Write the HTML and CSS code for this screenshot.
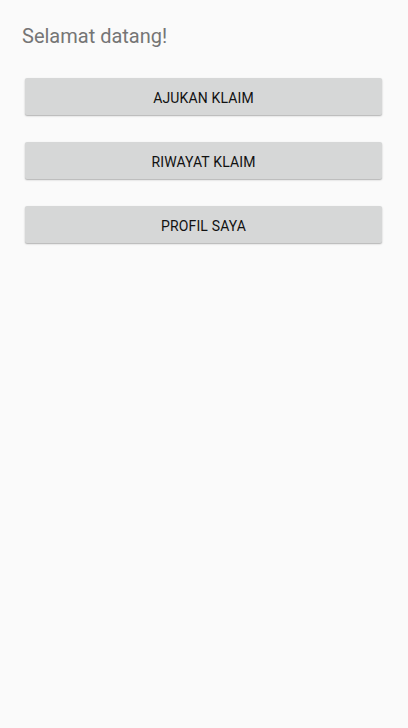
FILE: index.html
```html
<!DOCTYPE html>
<html lang="id">
<head>
<meta charset="utf-8">
<link rel="stylesheet" href="styles.css">
</head>
<body>
<main class="screen">
  <h1 class="title">Selamat datang!</h1>
  <div class="actions">
    <button class="btn">AJUKAN KLAIM</button>
    <button class="btn">RIWAYAT KLAIM</button>
    <button class="btn">PROFIL SAYA</button>
  </div>
</main>
</body>
</html>
```
FILE: styles.css
```css
html, body {
  margin: 0;
  padding: 0;
  background: #fafafa;
  height: 100%;
}
.screen {
  padding: 24px 26px 0 25px;
  font-family: Roboto, "Noto Sans", sans-serif;
}
.title {
  margin: 0 0 0 -3px;
  font-size: 20px;
  line-height: 24px;
  font-weight: 400;
  color: #757575;
}
.actions {
  display: flex;
  flex-direction: column;
  gap: 27px;
  margin-top: 30px;
}
.btn {
  height: 37px;
  border: none;
  border-radius: 2px;
  background: #d6d7d7;
  color: #111;
  font-family: Roboto, "Noto Sans", sans-serif;
  font-size: 14px;
  font-weight: 400;
  letter-spacing: 0.15px;
  box-shadow: 0 1px 2px rgba(0,0,0,0.22), 0 1px 1px rgba(0,0,0,0.10);
  padding: 2px 0 0;
}
```
